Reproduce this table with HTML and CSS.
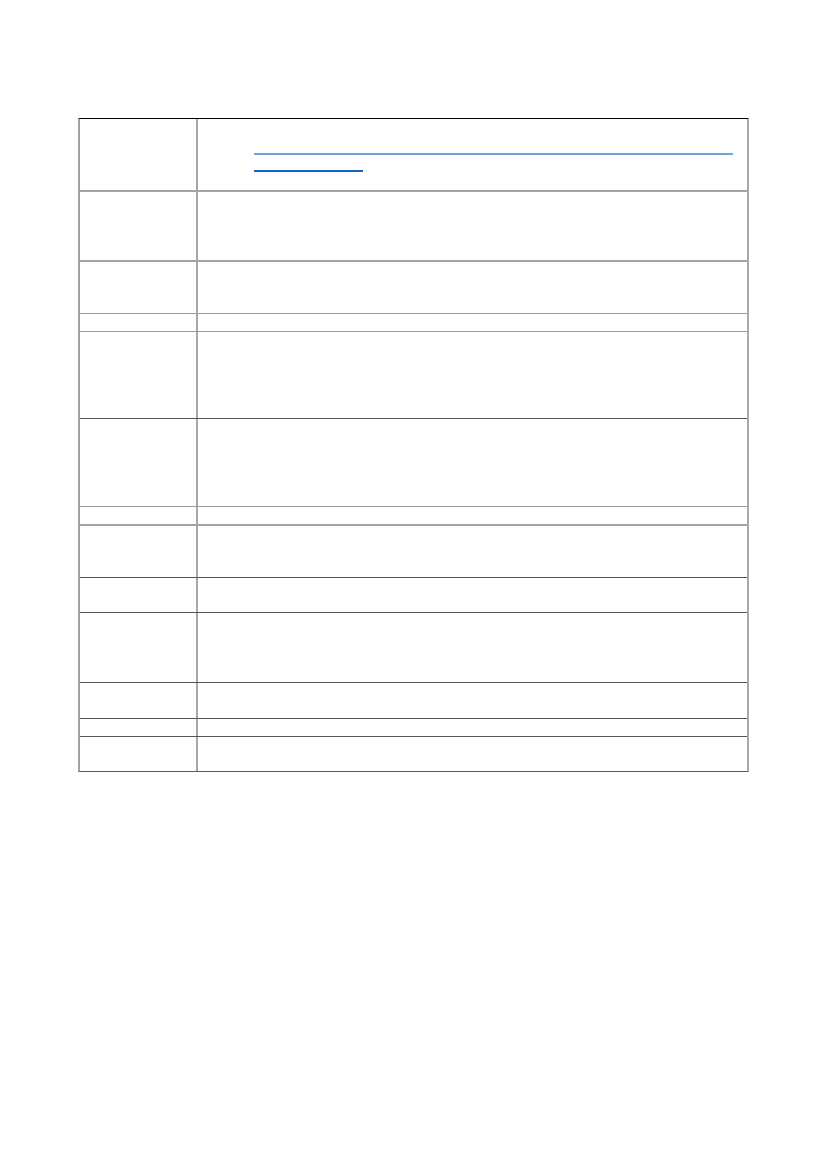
FILE: index.html
```html
<!DOCTYPE html>
<html lang="en">
<head>
<meta charset="utf-8">
<title>Table</title>
<link rel="stylesheet" href="styles.css">
</head>
<body>
<div class="sheet">
  <div class="row h71">
    <div class="cell"></div>
    <div class="cell main">
      <div class="link-lines">
        <div class="ul ul1"></div>
        <div class="ul ul2"></div>
      </div>
    </div>
  </div>
  <div class="row light2 h68"><div class="cell"></div><div class="cell main"></div></div>
  <div class="row light2 h51"><div class="cell"></div><div class="cell main"></div></div>
  <div class="row light1 h17"><div class="cell"></div><div class="cell main"></div></div>
  <div class="row light1 h86"><div class="cell"></div><div class="cell main"></div></div>
  <div class="row dark h87"><div class="cell"></div><div class="cell main"></div></div>
  <div class="row light1 h17"><div class="cell"></div><div class="cell main"></div></div>
  <div class="row light2 h51"><div class="cell"></div><div class="cell main"></div></div>
  <div class="row dark h34"><div class="cell"></div><div class="cell main"></div></div>
  <div class="row dark h69"><div class="cell"></div><div class="cell main"></div></div>
  <div class="row dark h35"><div class="cell"></div><div class="cell main"></div></div>
  <div class="row dark h17"><div class="cell"></div><div class="cell main"></div></div>
  <div class="row dark h34"><div class="cell"></div><div class="cell main"></div></div>
</div>
</body>
</html>
```

FILE: styles.css
```css
html, body {
  margin: 0;
  padding: 0;
  background: #ffffff;
  font-family: "Liberation Sans", Arial, sans-serif;
}

.sheet {
  box-sizing: border-box;
  width: 671px;
  margin: 118px 0 0 78px;
  border-top: 1px solid #000000;
  border-left: 2px solid #a3a3a3;
  border-right: 2px solid #a8a8a8;
  border-bottom: 1px solid #5a5a5a;
}

.row {
  display: grid;
  grid-template-columns: 116px 1fr;
}

.row.light2 { border-top: 2px solid #a3a3a3; }
.row.light1 { border-top: 1px solid #9a9a9a; }
.row.dark { border-top: 1px solid #555555; }

.cell { min-height: 0; }
.cell.main { border-left: 2px solid #a6a6a6; }

.h17 { height: 17px; }
.h34 { height: 34px; }
.h35 { height: 35px; }
.h51 { height: 51px; }
.h68 { height: 68px; }
.h69 { height: 69px; }
.h71 { height: 71px; }
.h86 { height: 86px; }
.h87 { height: 87px; }

.link-lines {
  padding: 34px 0 0 56px;
}

.ul { height: 0; }
.ul1 {
  width: 479px;
  border-top: 2px solid #70a3d8;
}
.ul2 {
  width: 109px;
  margin-top: 15px;
  border-top: 2px solid #1565c0;
}
```
